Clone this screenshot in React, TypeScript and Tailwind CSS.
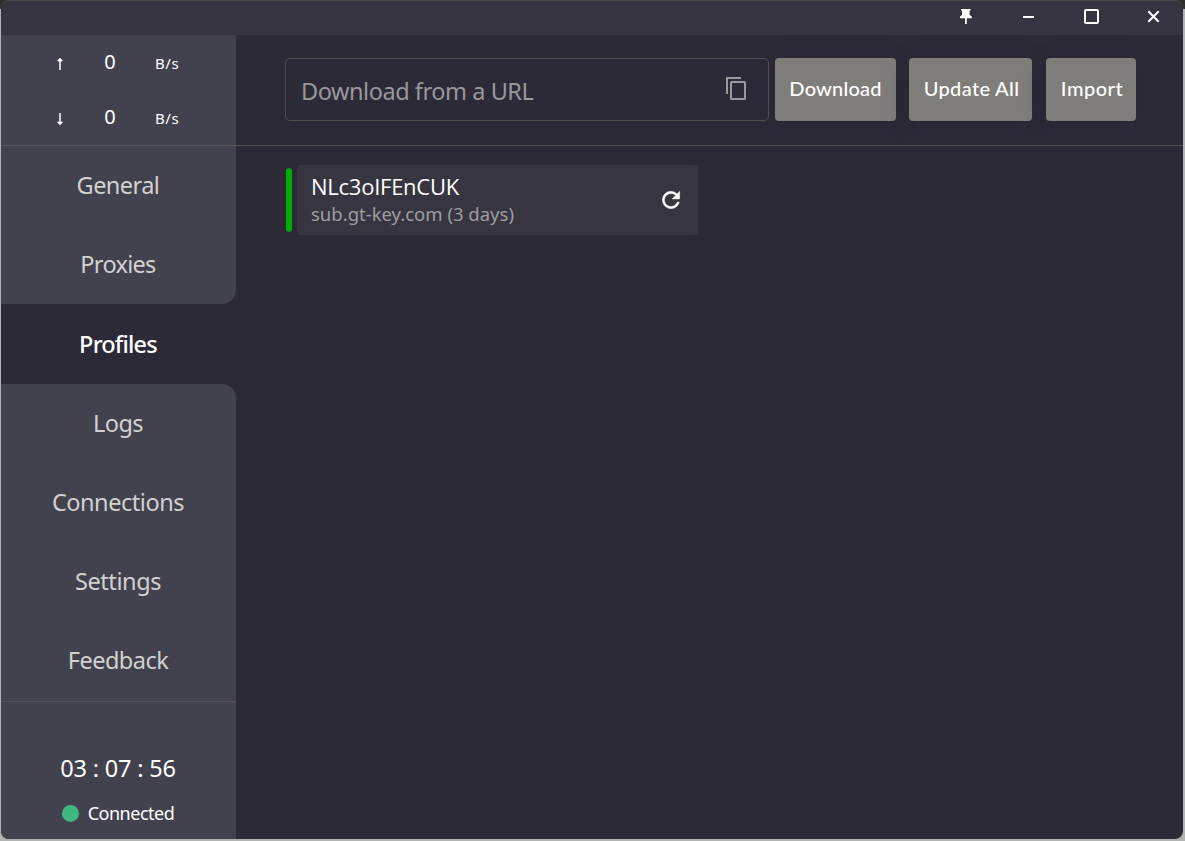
import React from "react";

type NavItem = { label: string; text: string; box: string };

const navItems: NavItem[] = [
  { label: "General", text: "tracking-[-0.55px]", box: "h-[79px] bg-[#42424e]" },
  { label: "Proxies", text: "tracking-[-0.7px]", box: "h-[79px] rounded-br-[14px] bg-[#42424e]" },
  { label: "Profiles", text: "tracking-[-0.8px] font-medium text-white", box: "h-[80px]" },
  { label: "Logs", text: "tracking-[-0.5px]", box: "h-[79px] rounded-tr-[14px] bg-[#42424e]" },
  { label: "Connections", text: "tracking-[-0.45px]", box: "h-[79px] bg-[#42424e]" },
  { label: "Settings", text: "tracking-[-0.4px]", box: "h-[79px] bg-[#42424e]" },
  { label: "Feedback", text: "tracking-[-0.5px]", box: "h-[79px] bg-[#42424e]" },
];

function SpeedRow({ up }: { up?: boolean }) {
  return (
    <div className="flex h-[55px] items-center text-white">
      <svg className="ml-[54px] mt-0.5 shrink-0" width="10" height="14" viewBox="0 0 10 14">
        <path
          d={up ? "M5 13V1.8M2.7 4.3 5 1.8l2.3 2.5" : "M5 1v11.2M2.7 9.7 5 12.2l2.3-2.5"}
          fill="none"
          stroke="currentColor"
          strokeWidth="1.5"
        />
      </svg>
      <span className="mb-0.5 ml-[39px] w-[12px] text-center text-[20px] leading-[20px]">0</span>
      <span className="ml-[39px] text-[15px] leading-[16px] tracking-[0.6px]">B/s</span>
    </div>
  );
}

function Sidebar() {
  return (
    <aside className="flex w-[235px] shrink-0 flex-col">
      <div className="h-[111px] border-b border-[#57565b] bg-[#42424e]">
        <SpeedRow up />
        <SpeedRow />
      </div>
      <nav className="flex flex-col">
        {navItems.map((item) => (
          <div
            key={item.label}
            className={"flex items-center justify-center pr-px pb-px text-[23.5px] leading-[32px] text-[#d2d1d0] " + item.box}
          >
            <span className={item.text}>{item.label}</span>
          </div>
        ))}
      </nav>
      <div className="flex flex-1 flex-col items-center bg-[#42424e] pt-px text-white">
        <div className="h-px w-full bg-[#53525a]" />
        <div className="mt-[50px] pr-px text-[23.5px] leading-[32px] tracking-[-0.2px] whitespace-pre">03 : 07 : 56</div>
        <div className="mt-[17px] flex items-center pr-px">
          <span className="mr-[9px] size-[17px] rounded-full bg-[#41b883]" />
          <span className="text-[18px] leading-[24px] tracking-[-0.5px]">Connected</span>
        </div>
      </div>
    </aside>
  );
}

function TitleBar() {
  return (
    <header className="flex h-[34px] shrink-0 justify-end bg-[#353440] text-white">
      <div className="flex w-[62px] items-center justify-center">
        <svg className="mb-1 ml-px" width="14" height="17" viewBox="0 0 14 17" fill="currentColor">
          <path d="M2 1h9.6v1.6h-1V7l2.2 1.4v1.8H7.8V16H6v-5.8H1V8.4L3 7V2.6H2z" />
        </svg>
      </div>
      <div className="flex w-[63px] items-center justify-center">
        <span className="mb-[3px] ml-0.5 h-[2px] w-[11px] bg-white" />
      </div>
      <div className="flex w-[62px] items-center justify-center">
        <span className="mb-1 ml-0.5 h-[15px] w-[15px] rounded-[2px] border-2 border-white" />
      </div>
      <div className="flex w-[62px] items-center justify-center">
        <svg className="mb-1 ml-0.5" width="13" height="13" viewBox="0 0 13 13">
          <path d="M1.3 1.3l10.4 10.4M11.7 1.3 1.3 11.7" stroke="currentColor" strokeWidth="2" />
        </svg>
      </div>
    </header>
  );
}

const buttonBase =
  "flex h-[63px] items-center justify-center rounded bg-[#7f7d7a] pb-1 text-white shadow-[0_4px_24px_rgba(30,28,40,0.2)] text-[20px] font-['Lato',sans-serif] font-medium";

function Toolbar() {
  return (
    <div className="flex h-[111px] items-start border-b border-[#55504f] pt-[23px] pl-[49px]">
      <div className="flex h-[63px] w-[484px] items-center justify-between rounded-[5px] border border-[#53504f] pr-[21px] pl-[15px] text-[#99989b]">
        <span className="mt-0.5 text-[23.5px] leading-[32px] tracking-[-0.45px]">Download from a URL</span>
        <svg className="mb-1" width="24" height="26" viewBox="0 0 24 26" fill="none" stroke="currentColor" strokeWidth="2">
          <path d="M4 19V3H18" />
          <rect x="8" y="7" width="14" height="17" rx="0.5" />
        </svg>
      </div>
      <button className={buttonBase + " ml-1.5 w-[121px] tracking-[0.2px]"}>Download</button>
      <button className={buttonBase + " ml-[13px] w-[123px] pl-0.5 tracking-[0.35px]"}>Update All</button>
      <button className={buttonBase + " ml-[14px] w-[90px] pl-0.5 tracking-[0.5px]"}>Import</button>
    </div>
  );
}

function ProfileCard() {
  return (
    <div className="mt-[19px] ml-[50px] flex items-center">
      <div className="h-[64px] w-[6px] rounded-[3px] bg-[#02aa04]" />
      <div className="ml-[5px] flex h-[70px] w-[401px] items-center justify-between rounded bg-[#373540] pr-[14px] pl-[14px]">
        <div className="flex flex-col">
          <span className="font-['Open_Sans',sans-serif] text-[22px] leading-[28px] tracking-[-0.25px] text-white">NLc3oIFEnCUK</span>
          <span className="text-[18.5px] leading-[28px] text-[#9e9da0]">sub.gt-key.com (3 days)</span>
        </div>
        <svg
          className="text-white"
          width="26"
          height="26"
          viewBox="0 0 24 24"
          fill="currentColor"
          stroke="currentColor"
          strokeWidth="0.4"
        >
          <path d="M17.65 6.35A7.96 7.96 0 0 0 12 4a8 8 0 1 0 7.73 10h-2.08A6 6 0 1 1 12 6c1.66 0 3.14.69 4.22 1.78L13 11h7V4z" />
        </svg>
      </div>
    </div>
  );
}

export default function App() {
  return (
    <div className="h-[841px] w-[1185px] overflow-hidden bg-[linear-gradient(#303030_9px,#b1b3b2_9px)] pl-px font-['Noto_Sans','Open_Sans',sans-serif]">
      <div className="flex h-[839px] w-[1182px] flex-col overflow-hidden rounded-[8px] border-t border-[#4d4c4d] bg-[#2c2a37]">
        <TitleBar />
        <div className="flex min-h-0 flex-1">
          <Sidebar />
          <main className="flex-1">
            <Toolbar />
            <ProfileCard />
          </main>
        </div>
      </div>
    </div>
  );
}
